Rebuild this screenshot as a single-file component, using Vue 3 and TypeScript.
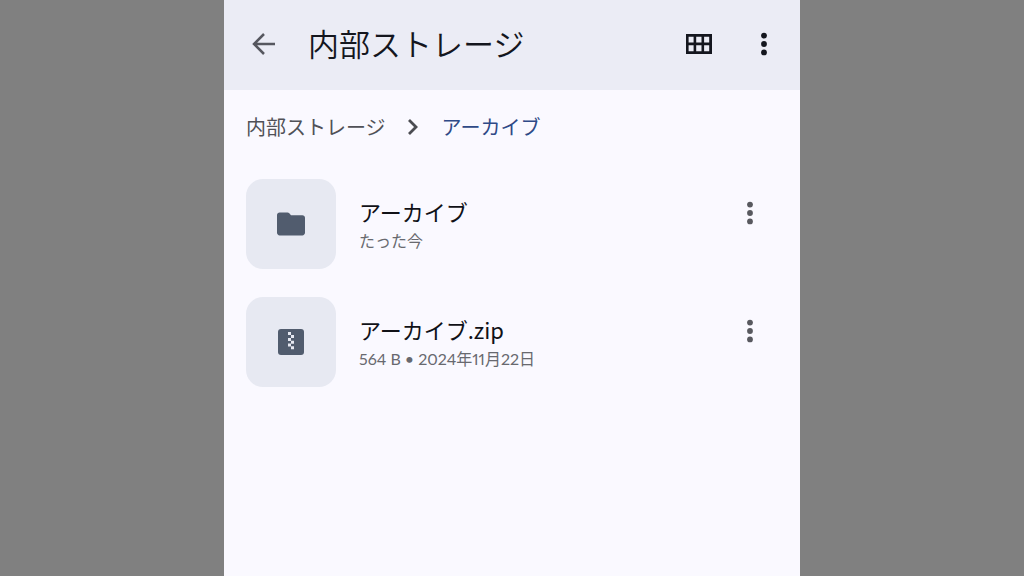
<script setup lang="ts">
interface FileEntry {
  name: string
  detail: string
  kind: 'folder' | 'zip'
}

const title = '内部ストレージ'

const files: FileEntry[] = [
  { name: 'アーカイブ', detail: 'たった今', kind: 'folder' },
  { name: 'アーカイブ.zip', detail: '564 B • 2024年11月22日', kind: 'zip' },
]
</script>

<template>
  <div class="screen">
    <div class="panel">
      <header class="bar">
        <button class="icon-button" type="button" aria-label="戻る">
          <svg class="back" width="24" height="24" viewBox="0 0 24 24" fill="none" aria-hidden="true">
            <path d="M23 12H2M12 2L2 12L12 22" stroke="currentColor" stroke-width="2.5" />
          </svg>
        </button>
        <h1 class="title">{{ title }}</h1>
        <button class="icon-button" type="button" aria-label="グリッド表示">
          <svg width="26" height="20" viewBox="0 0 26 20" aria-hidden="true">
            <path
              fill="currentColor"
              fill-rule="evenodd"
              d="M0 0H26V20H0ZM2.6 2.8V8.6H7.6V2.8ZM10.2 2.8V8.6H15.5V2.8ZM18.1 2.8V8.6H23.2V2.8ZM2.6 11.2V17.2H7.6V11.2ZM10.2 11.2V17.2H15.5V11.2ZM18.1 11.2V17.2H23.2V11.2Z"
            />
          </svg>
        </button>
        <button class="icon-button" type="button" aria-label="その他のオプション">
          <svg width="6" height="24" viewBox="0 0 6 24" fill="currentColor" aria-hidden="true">
            <circle cx="3" cy="3.6" r="2.9" />
            <circle cx="3" cy="12" r="2.9" />
            <circle cx="3" cy="20.4" r="2.9" />
          </svg>
        </button>
      </header>

      <nav class="crumbs" aria-label="パンくず">
        <a class="crumb" href="#">{{ title }}</a>
        <svg width="14" height="18" viewBox="0 0 14 18" fill="none" aria-hidden="true">
          <path d="M2 2L9 9L2 16" stroke="#4b4c51" stroke-width="2.8" />
        </svg>
        <a class="crumb current" href="#" aria-current="page">アーカイブ</a>
      </nav>

      <ul class="files">
        <li v-for="file in files" :key="file.name" class="file">
          <span class="thumb">
            <svg v-if="file.kind === 'folder'" width="28" height="24" viewBox="0 0 28 24" aria-hidden="true">
              <path
                fill="currentColor"
                d="M2.6 0.5H10.5C11.2 0.5 11.8 0.8 12.3 1.3L14 3.2H25.4C26.8 3.2 28 4.4 28 5.8V20.8C28 22.2 26.8 23.4 25.4 23.4H2.6C1.2 23.4 0 22.2 0 20.8V3.1C0 1.7 1.2 0.5 2.6 0.5Z"
              />
            </svg>
            <svg v-else width="26" height="26" viewBox="0 0 26 26" aria-hidden="true">
              <rect width="26" height="26" rx="3" fill="currentColor" />
              <path
                fill="#e7e9f2"
                d="M10 3h3v3h-3zM13 6h3v3h-3zM10 9h3v3h-3zM13 11.7h3v3h-3zM10 14.5h3v3h-3zM13 17.2h3v3h-3z"
              />
            </svg>
          </span>
          <span class="text">
            <span class="name">{{ file.name }}</span>
            <span class="detail">{{ file.detail }}</span>
          </span>
          <button class="icon-button more" type="button" :aria-label="`${file.name} のオプション`">
            <svg width="6" height="24" viewBox="0 0 6 24" fill="currentColor" aria-hidden="true">
              <circle cx="3" cy="3.6" r="2.9" />
              <circle cx="3" cy="12" r="2.9" />
              <circle cx="3" cy="20.4" r="2.9" />
            </svg>
          </button>
        </li>
      </ul>
    </div>
  </div>
</template>

<style>
body {
  margin: 0;
  background: #808080;
}
</style>

<style scoped>
.screen {
  display: flex;
  justify-content: center;
  min-height: 100vh;
  background: #808080;
  font-family: "Noto Sans CJK JP", sans-serif;
}

.panel {
  flex: 1;
  max-width: 36rem;
  background: #faf9ff;
}

.bar {
  display: flex;
  align-items: center;
  padding: 19px 16px 21px 20px;
  background: #ebecf5;
  color: #14161e;
}

.icon-button {
  display: flex;
  align-items: center;
  justify-content: center;
  flex: none;
  width: 40px;
  height: 50px;
  padding: 0;
  border: 0;
  background: none;
  color: inherit;
  cursor: pointer;
}

.icon-button + .icon-button {
  margin-left: 25px;
}

.back {
  color: #56575f;
}

.title {
  flex: 1;
  margin: 0 0 0 24px;
  padding-bottom: 2px;
  font-size: 31px;
  font-weight: 350;
  line-height: 48px;
}

.crumbs {
  display: flex;
  align-items: center;
  gap: 21px;
  padding: 21px 22px 0;
}

.crumb {
  color: #505157;
  font-size: 20px;
  line-height: 32px;
  text-decoration: none;
}

.crumb.current {
  color: #2f4a87;
}

.files {
  display: flex;
  flex-direction: column;
  gap: 28px;
  margin: 0;
  padding: 36px 30px 36px 22px;
  list-style: none;
}

.file {
  display: flex;
  align-items: flex-start;
}

.thumb {
  display: flex;
  align-items: center;
  justify-content: center;
  flex: none;
  width: 90px;
  height: 90px;
  border-radius: 17px;
  background: #e7e9f2;
  color: #515c6e;
}

.text {
  display: flex;
  flex: 1;
  flex-direction: column;
  margin-left: 23px;
  padding-top: 16px;
}

.name {
  color: #101117;
  font-size: 22px;
  line-height: 32px;
}

.detail {
  color: #68696f;
  font-family: Lato, "Noto Sans CJK JP", sans-serif;
  font-size: 16px;
  font-variant-numeric: proportional-nums;
  line-height: 28px;
}

.more {
  margin-top: 9px;
  color: #58595f;
}
</style>
